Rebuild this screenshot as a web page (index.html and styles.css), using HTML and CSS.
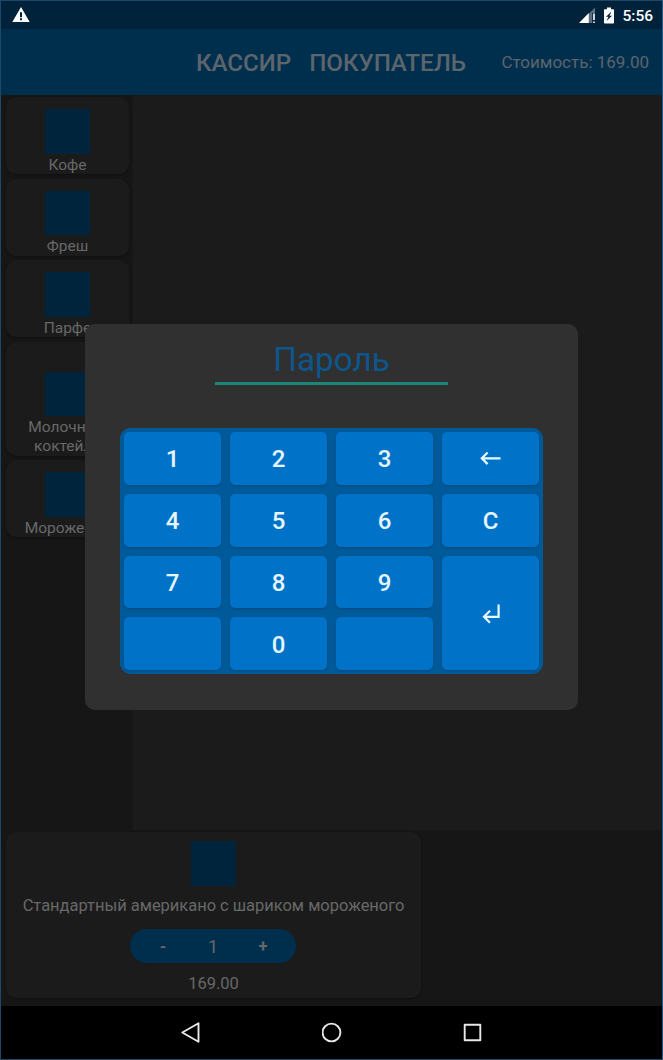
FILE: index.html
```html
<!DOCTYPE html>
<html lang="ru">
<head>
<meta charset="utf-8">
<title>Касса</title>
<link rel="stylesheet" href="styles.css">
</head>
<body>
<div class="screen">
  <div class="status">
    <svg class="warn" width="18" height="16" viewBox="0 0 18 16"><path fill="#fff" fill-rule="evenodd" d="M9 0 17.700 15H.3zM8 5.200v5h2v-5zM8 11.300v2h2v-2z"/></svg>
    <div class="status-right">
      <svg class="signal" width="17" height="17" viewBox="0 0 17 17"><path fill="#fff" fill-opacity=".35" d="M16 .5v5.500h-2.800v10H9.500V7z"/><path fill="#fff" d="M0 16 9.800 6v10zM14.200 6.500h1.600v6.500h-1.600zM14.200 14.400h1.600V16h-1.600z"/></svg>
      <svg class="battery" width="10" height="17" viewBox="0 0 10 17"><path fill="#fff" fill-rule="evenodd" d="M3 .5h4v1.700h2.300q.7 0 .7.700v12.900q0 .7-.7.700H.7q-.7 0-.7-.7V2.900q0-.7.7-.7H3zM7.500 4.500 2 9.700h2.500L2.500 14 8 8.700H5.500z"/></svg>
      <span class="clock">5:56</span>
    </div>
  </div>
  <header class="header">
    <span class="tab">КАССИР</span>
    <span class="tab">ПОКУПАТЕЛЬ</span>
    <span class="total">Стоимость: 169.00</span>
  </header>
  <div class="content">
    <aside class="categories">
      <div class="category"><i class="thumb"></i><span>Кофе</span></div>
      <div class="category"><i class="thumb"></i><span>Фреш</span></div>
      <div class="category"><i class="thumb"></i><span>Парфе</span></div>
      <div class="category tall"><i class="thumb"></i><span>Молочный<br>коктейль</span></div>
      <div class="category"><i class="thumb"></i><span>Мороженое</span></div>
    </aside>
    <main class="products"></main>
  </div>
  <section class="cart">
    <div class="item">
      <i class="thumb"></i>
      <span class="item-name">Стандартный американо с шариком мороженого</span>
      <div class="stepper"><b>-</b><span>1</span><b>+</b></div>
      <span class="price">169.00</span>
    </div>
  </section>
  <nav class="nav">
    <svg width="20" height="22" viewBox="0 0 20 22"><path d="M17.500 1.200v18.600L1.300 10.500z"/></svg>
    <svg width="20" height="22" viewBox="0 0 20 22"><circle cx="9.500" cy="10.500" r="8.900"/></svg>
    <svg width="20" height="22" viewBox="0 0 20 22"><path d="M1.700 2.700h15.600v15.600H1.700z"/></svg>
  </nav>
  <div class="dialog">
    <div class="password">Пароль</div>
    <div class="keypad">
      <div class="key">1</div><div class="key">2</div><div class="key">3</div>
      <div class="key"><svg width="22" height="16" viewBox="0 0 22 16"><path d="M20.500 7.300H2M7.600 1.500 1.800 7.300l5.800 5.800"/></svg></div>
      <div class="key">4</div><div class="key">5</div><div class="key">6</div><div class="key">C</div>
      <div class="key">7</div><div class="key">8</div><div class="key">9</div>
      <div class="key enter"><svg width="20" height="20" viewBox="0 0 20 20"><path d="M17.600 .5v12.300H3M9 6.800 3 12.800l6 6"/></svg></div>
      <div class="key"></div><div class="key">0</div><div class="key"></div>
    </div>
  </div>
</div>
</body>
</html>
```
FILE: styles.css
```css
* { box-sizing: border-box; }
body { margin: 0; background: #000; }
.screen {
  position: relative;
  display: flex;
  flex-direction: column;
  width: 663px;
  height: 1060px;
  overflow: hidden;
  border: 1px solid #1f4868;
  border-right-color: #205a8c;
  background: #161616;
  color: #686868;
  font-family: Roboto, sans-serif;
}
.status {
  display: flex;
  justify-content: space-between;
  align-items: center;
  height: 28px;
  padding: 0 9px 0 11px;
  background: #00223a;
}
.status svg { display: block; }
.status-right { display: flex; align-items: center; }
.battery { margin: 0 8px 0 8px; }
.clock { padding-top: 2px; color: #fff; font-size: 15.500px; font-weight: 500; line-height: 26px; }
.header {
  display: flex;
  align-items: center;
  height: 66px;
  padding: 0 13px 0 195px;
  background: #002f4e;
  color: #5c656c;
}
.tab { margin-right: 18px; padding-top: 1px; font-size: 24.200px; font-weight: 500; line-height: 30px; letter-spacing: -.05px; white-space: nowrap; }
.total { margin-left: auto; font-size: 17px; white-space: nowrap; }
.content { display: flex; height: 735px; }
.categories {
  display: flex;
  flex-direction: column;
  gap: 4.500px;
  width: 132px;
  padding: 2px 4px 0 5px;
}
.category {
  display: flex;
  flex-direction: column;
  align-items: center;
  height: 77px;
  padding-top: 12px;
  border-radius: 10px;
  background: #1b1b1b;
  box-shadow: 0 1px 2px #101010;
  font-size: 15.500px;
  line-height: 18.500px;
  text-align: center;
}
.category span { margin-top: 2px; }
.tall { height: 114px; padding-top: 30px; }
.thumb { display: block; flex: none; width: 45px; height: 44.500px; background: #00243c; }
.products { flex: 1; background: #1b1b1b; }
.cart { height: 176px; padding: 2px 5px; }
.item {
  display: flex;
  flex-direction: column;
  align-items: center;
  width: 415px;
  height: 166px;
  padding-top: 9px;
  border-radius: 10px;
  background: #1b1b1b;
  box-shadow: 0 1px 2px #101010;
  font-size: 16.500px;
}
.item-name { margin-top: 10px; line-height: 20px; letter-spacing: -.03px; white-space: nowrap; }
.stepper {
  display: grid;
  grid-template-columns: 1fr 1fr 1fr;
  align-items: center;
  width: 166px;
  height: 34px;
  margin-top: 13px;
  margin-right: 1px;
  padding: 1px 8px 0;
  border-radius: 17px;
  background: #002f4e;
  text-align: center;
}
.stepper span { font-size: 18px; }
.price { margin-top: 11.500px; line-height: 20px; }
.nav {
  display: flex;
  justify-content: center;
  align-items: center;
  gap: 121px;
  height: 53px;
  background: #000;
}
.nav svg { fill: none; stroke: #e8e8e8; stroke-width: 1.900; stroke-linejoin: round; }
.dialog {
  position: absolute;
  top: 323px;
  left: 84px;
  display: flex;
  flex-direction: column;
  align-items: center;
  width: 493px;
  height: 386px;
  border-radius: 10px;
  background: #303030;
}
.password {
  width: 233px;
  height: 61px;
  padding-top: 16px;
  border-bottom: 3px solid #1b8578;
  color: #0d568c;
  font-size: 33.300px;
  line-height: 40px;
  text-align: center;
}
.keypad {
  display: grid;
  grid-template-columns: repeat(4, 1fr);
  grid-template-rows: repeat(4, 1fr);
  gap: 9px;
  width: 423px;
  height: 246px;
  margin-top: 43px;
  padding: 4px;
  border-radius: 11px;
  background: #005998;
}
.key {
  display: flex;
  justify-content: center;
  align-items: center;
  padding-top: 2px;
  border-radius: 5px;
  background: #0073c8;
  box-shadow: 0 1px 2px #004a80;
  color: #e6f5fd;
  font-size: 24px;
  font-weight: 500;
}
.key svg { fill: none; stroke: #e6fbff; stroke-width: 2.200; }
.enter { grid-row: 3 / 5; grid-column: 4; }
```
